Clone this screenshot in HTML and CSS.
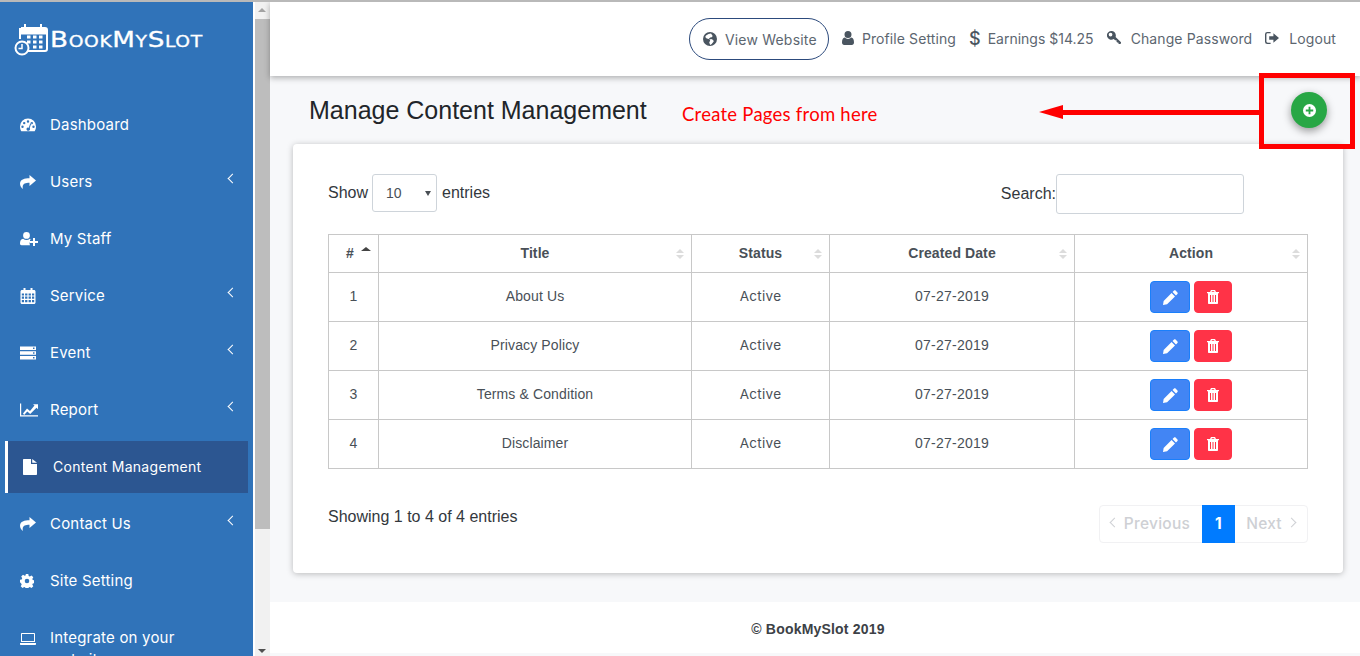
FILE: index.html
```html
<!DOCTYPE html>
<html lang="en">
<head>
<meta charset="utf-8">
<title>Manage Content Management</title>
<link rel="stylesheet" href="styles.css">
</head>
<body>
<svg class="defs" aria-hidden="true">
  <symbol id="i-gauge" viewBox="0 0 16 14"><path fill-rule="evenodd" d="M8 .5A8 8 0 0 0 0 8.5c0 1.800.5 3.400 1.300 4.700h13.400A8 8 0 0 0 16 8.500a8 8 0 0 0-8-8zM8 2.300a1.200 1.200 0 1 1 0 2.400 1.200 1.200 0 0 1 0-2.400zM4.200 3.900a1.200 1.200 0 1 1 0 2.400 1.200 1.200 0 0 1 0-2.400zM11.800 3.900a1.200 1.200 0 1 1 0 2.400 1.200 1.200 0 0 1 0-2.400zM2.500 7.600a1.200 1.200 0 1 1 0 2.400 1.200 1.200 0 0 1 0-2.400zM13.500 7.600a1.200 1.200 0 1 1 0 2.400 1.200 1.200 0 0 1 0-2.400zM10.500 4.500l.9.400-1.700 5a1.800 1.800 0 1 1-3.200.9 1.800 1.800 0 0 1 2.300-1.100z"/></symbol>
  <symbol id="i-share" viewBox="0 0 16 14"><path d="M9.500 0 16 5.500 9.500 11V7.700C5.500 7.700 3 8.500 2.700 11.500c-.1.900 0 1.700.3 2.500C1.300 12.800 0 10.800 0 8.700 0 4.500 4.500 3.300 9.500 3.300z"/></symbol>
  <symbol id="i-userplus" viewBox="0 0 18 14"><path d="M6.500 0a3.400 3.400 0 1 1 0 6.800 3.400 3.400 0 0 1 0-6.800zM3.200 6.800c.9.800 2 1.200 3.300 1.200s2.400-.4 3.300-1.200c.7.100 1.200.4 1.600.8H10v3h-.5c0 .9.100 1.700.5 2.600H1.500C.6 13.200 0 12.600 0 11.600 0 9 .8 7 3.200 6.800zM13 6h2v3h3v2h-3v3h-2v-3h-3V9h3z"/></symbol>
  <symbol id="i-cal" viewBox="0 0 15 16"><path fill-rule="evenodd" d="M3 0h2v2h5V0h2v2h1.500c.8 0 1.500.7 1.500 1.500v11c0 .8-.7 1.500-1.500 1.500h-12C.7 16 0 15.300 0 14.500v-11C0 2.700.7 2 1.500 2H3zM1.300 5.500v2h2.200v-2zm3.300 0v2h2.300v-2zm3.500 0v2h2.300v-2zm3.400 0v2h2.200v-2zM1.300 8.600v2.200h2.200V8.600zm3.300 0v2.200h2.300V8.600zm3.500 0v2.200h2.300V8.600zm3.400 0v2.200h2.200V8.600zM1.300 11.900v2.300h2.200v-2.300zm3.300 0v2.300h2.300v-2.300zm3.500 0v2.300h2.300v-2.300zm3.400 0v2.300h2.200v-2.300z"/></symbol>
  <symbol id="i-server" viewBox="0 0 16 13"><path fill-rule="evenodd" d="M0 0h16v3.500H0zM0 4.700h16v3.600H0zM0 9.500h16V13H0zM13 1v1.500h1.500V1zM13 5.700v1.500h1.500V5.700zM13 10.500V12h1.500v-1.500z"/></symbol>
  <symbol id="i-chart" viewBox="0 0 18 13"><path d="M0 0h1.200v11.800H18V13H0zM3 10l4-5 3 2.500L14.500 2 13 .8H18v5l-1.500-1.600L10.200 10.500 7.300 8l-3.200 3.400z"/></symbol>
  <symbol id="i-file" viewBox="0 0 14 16"><path d="M0 1C0 .4.400 0 1 0h7v5h6v10c0 .6-.4 1-1 1H1c-.6 0-1-.4-1-1zM9.200 0 14 3.800H9.200z"/></symbol>
  <symbol id="i-cog" viewBox="0 0 14 14"><path fill-rule="evenodd" d="M5.700 0h2.600l.4 1.900 1.100.5 1.700-1 1.800 1.800-1 1.700.5 1.100 2.200.4v2.600l-2.200.4-.5 1.100 1 1.700-1.800 1.800-1.700-1-1.100.5-.4 2H5.700l-.4-2-1.100-.5-1.700 1-1.800-1.800 1-1.700-.5-1.100L0 8.300V5.700l1.700-.3.500-1.100-1-1.700L3 .8l1.700 1 1.100-.5zM7 4.700a2.300 2.300 0 1 0 0 4.600 2.300 2.300 0 0 0 0-4.600z"/></symbol>
  <symbol id="i-laptop" viewBox="0 0 16 12"><path fill-rule="evenodd" d="M2 0h12c.6 0 1 .4 1 1v8H1V1c0-.6.400-1 1-1zm0 1v7h12V1zM0 10h16v1c0 .6-.4 1-1 1H1c-.6 0-1-.4-1-1z"/></symbol>
  <symbol id="i-globe" viewBox="0 0 14 14"><path fill-rule="evenodd" d="M7 0a7 7 0 1 1 0 14A7 7 0 0 1 7 0zM3 3.500 2.200 5l1.500 1.500 2.300.5 1.200 1.500-1 2 1 2.500 1.500-1 2-2.500-.5-1.500-2-1-1.700.5-.5-1 1.200-1 1.500-.2 1-1.300L8 1.500 5.500 2z"/></symbol>
  <symbol id="i-user" viewBox="0 0 12 14"><path d="M6 0a3.500 3.500 0 1 1 0 7 3.500 3.500 0 0 1 0-7zM2.700 6.600C3.600 7.500 4.700 8 6 8s2.400-.5 3.300-1.400c1.800.2 2.700 1.900 2.700 4.900 0 1.500-.9 2.500-2.200 2.500H2.200C.9 14 0 13 0 11.500c0-3 .9-4.700 2.700-4.900z"/></symbol>
  <symbol id="i-key" viewBox="0 0 15 15"><path fill-rule="evenodd" d="M4.800 0C7.400 0 9.500 2.100 9.500 4.700c0 .6-.1 1.100-.3 1.600L15 12v1.200l-.7.800h-1.500l-.6-.6v-1.200h-1.300l-.7-.8V10H8.700L7.200 8.600A4.700 4.700 0 1 1 4.800 0zM3.800 1.800a2 2 0 1 0 0 4 2 2 0 0 0 0-4z"/></symbol>
  <symbol id="i-logout" viewBox="0 0 15 13"><path fill-rule="evenodd" d="M2.500 0H6v1.500H3C2 1.500 1.500 2 1.500 3v7c0 1 .5 1.500 1.500 1.500h3V13H2.500A2.500 2.500 0 0 1 0 10.500v-8A2.500 2.500 0 0 1 2.500 0zM9 1.500l6 5-6 5V8.500H4.500v-4H9z"/></symbol>
  <symbol id="i-pencil" viewBox="0 0 14 14"><path d="M10.300.5c.4-.4 1-.4 1.400 0l1.800 1.800c.4.400.4 1 0 1.400l-1.400 1.400L8.900 1.900zM8 2.800 11.200 6l-7.400 7.400L0 14l.6-3.800z"/></symbol>
  <symbol id="i-trash" viewBox="0 0 12 14"><path fill-rule="evenodd" d="M4 0h4l1 2h3v1.300h-1V13c0 .6-.4 1-1 1H2c-.6 0-1-.4-1-1V3.300H0V2h3zM5 1.200 4.500 2h3L7 1.200zM3 5v7h1V5zm2.500 0v7h1V5zM8 5v7h1V5z"/></symbol>
  <symbol id="i-plus" viewBox="0 0 14 14"><path fill-rule="evenodd" d="M7 0a7 7 0 1 1 0 14A7 7 0 0 1 7 0zM6 3v3H3v2h3v3h2V8h3V6H8V3z"/></symbol>
</svg>

<div class="app">
  <aside class="sidebar">
    <div class="logo">
      <svg class="logo-icon" viewBox="0 0 36 34" fill="none" stroke="#fff">
        <path stroke-width="2" d="M7 6h24c1.500 0 2 .5 2 2v19c0 1.500-.5 2-2 2H14"/>
        <path stroke-width="6" d="M6 9.500h26"/>
        <path stroke-width="2" d="M6 6v11M11 2v6M27 2v6"/>
        <path stroke-width="3" d="M13 15h3.500M19 15h3.500M25 15h3.500M13 20h3.500M19 20h3.500M25 20h3.500M19 25h3.500M25 25h3.500"/>
        <circle stroke-width="2" cx="8" cy="26" r="6.500"/>
        <path stroke-width="1.500" d="M8 22v4.500H4.500"/>
      </svg>
      <span class="logo-text">BookMySlot</span>
    </div>
    <nav class="menu">
      <a class="menu-item"><svg class="mi"><use href="#i-gauge"/></svg><span>Dashboard</span></a>
      <a class="menu-item has-sub"><svg class="mi"><use href="#i-share"/></svg><span>Users</span></a>
      <a class="menu-item"><svg class="mi wide"><use href="#i-userplus"/></svg><span>My Staff</span></a>
      <a class="menu-item has-sub"><svg class="mi tall"><use href="#i-cal"/></svg><span>Service</span></a>
      <a class="menu-item has-sub"><svg class="mi"><use href="#i-server"/></svg><span>Event</span></a>
      <a class="menu-item has-sub"><svg class="mi wide"><use href="#i-chart"/></svg><span>Report</span></a>
      <a class="menu-item active"><svg class="mi"><use href="#i-file"/></svg><span>Content Management</span></a>
      <a class="menu-item has-sub"><svg class="mi"><use href="#i-share"/></svg><span>Contact Us</span></a>
      <a class="menu-item"><svg class="mi small"><use href="#i-cog"/></svg><span>Site Setting</span></a>
      <a class="menu-item multi"><svg class="mi"><use href="#i-laptop"/></svg><span>Integrate on your website</span></a>
    </nav>
  </aside>

  <div class="scrollbar">
    <div class="sb-up"></div>
    <div class="sb-thumb"></div>
    <div class="sb-track"></div>
    <div class="sb-down"></div>
  </div>

  <main class="main">
    <header class="topbar">
      <a class="pill"><svg class="ti"><use href="#i-globe"/></svg>View Website</a>
      <a class="top-link"><svg class="ti user"><use href="#i-user"/></svg>Profile Setting</a>
      <a class="top-link earn"><b class="dollar">$</b>Earnings $14.25</a>
      <a class="top-link"><svg class="ti"><use href="#i-key"/></svg>Change Password</a>
      <a class="top-link"><svg class="ti"><use href="#i-logout"/></svg>Logout</a>
    </header>

    <div class="page-title"><h1>Manage Content Management</h1></div>

    <section class="card">
      <div class="controls">
        <label class="length">Show
          <span class="select-wrap"><select class="length-select"><option>10</option><option>25</option><option>50</option></select></span>
          entries</label>
        <label class="search">Search:<input class="search-input" type="text"></label>
      </div>

      <table class="grid">
        <thead>
          <tr>
            <th class="c-n sorted">#</th>
            <th class="c-t">Title</th>
            <th class="c-s">Status</th>
            <th class="c-d">Created Date</th>
            <th class="c-a">Action</th>
          </tr>
        </thead>
        <tbody>
          <tr><td>1</td><td>About Us</td><td class="status">Active</td><td class="date">07-27-2019</td><td class="acts"><button class="btn edit"><svg><use href="#i-pencil"/></svg></button><button class="btn del"><svg><use href="#i-trash"/></svg></button></td></tr>
          <tr><td>2</td><td>Privacy Policy</td><td class="status">Active</td><td class="date">07-27-2019</td><td class="acts"><button class="btn edit"><svg><use href="#i-pencil"/></svg></button><button class="btn del"><svg><use href="#i-trash"/></svg></button></td></tr>
          <tr><td>3</td><td>Terms &amp; Condition</td><td class="status">Active</td><td class="date">07-27-2019</td><td class="acts"><button class="btn edit"><svg><use href="#i-pencil"/></svg></button><button class="btn del"><svg><use href="#i-trash"/></svg></button></td></tr>
          <tr><td>4</td><td>Disclaimer</td><td class="status">Active</td><td class="date">07-27-2019</td><td class="acts"><button class="btn edit"><svg><use href="#i-pencil"/></svg></button><button class="btn del"><svg><use href="#i-trash"/></svg></button></td></tr>
        </tbody>
      </table>

      <div class="table-foot">
        <div class="info">Showing 1 to 4 of 4 entries</div>
        <div class="pager">
          <a class="pg prev">Previous</a>
          <a class="pg cur">1</a>
          <a class="pg next">Next</a>
        </div>
      </div>
    </section>

    <footer class="footer">© BookMySlot 2019</footer>
  </main>
</div>

<a class="fab"><svg><use href="#i-plus"/></svg></a>
<div class="callout-box"></div>
<div class="callout-line"></div>
<div class="callout-head"></div>
<div class="callout-text">Create Pages from here</div>
</body>
</html>
```
FILE: styles.css
```css
* { box-sizing: border-box; }
html, body { margin: 0; height: 100%; overflow: hidden; }
body { background: #fff; font-family: "Liberation Sans", Arial, sans-serif; color: #212529; border-top: 2px solid #b9b9b9; position: relative; }
.defs { position: absolute; width: 0; height: 0; }
.app { display: flex; height: 654px; }

/* sidebar */
.sidebar { width: 253px; flex: none; background: #3073b9; overflow: hidden; color: #fff; font-family: Inter, "Open Sans", sans-serif; }
.logo { display: flex; align-items: center; height: 94px; padding: 0 0 20px 14px; }
.logo-icon { width: 36px; height: 34px; flex: none; }
.logo-text { font-family: "DejaVu Sans", sans-serif; font-variant: small-caps; font-size: 21px; letter-spacing: .5px; line-height: 1; transform: scaleX(1.25); transform-origin: left center; -webkit-text-stroke: .3px #fff; padding-top: 3px; }
.menu { display: flex; flex-direction: column; }
.menu-item { height: 57px; flex: none; display: flex; align-items: center; padding: 0 0 0 20px; position: relative; font-size: 15px; letter-spacing: .2px; color: #fff; }
.menu-item span { margin-left: 14px; }
.mi { width: 16px; height: 14px; fill: #fff; flex: none; }
.mi.wide { width: 18px; height: 14px; margin-right: -2px; }
.mi.small { width: 14px; height: 14px; margin-right: 2px; }
.mi.tall { height: 16px; }
.has-sub::after { content: ""; position: absolute; left: 229px; top: 22px; width: 6px; height: 6px; border-left: 1.5px solid #fff; border-bottom: 1.5px solid #fff; transform: rotate(45deg); }
.active { height: 52px; margin: 3px 5px 2px; width: 243px; background: #2c5691; border-left: 3px solid #fff; padding: 0 0 1px 15px; font-size: 14px; letter-spacing: .3px; }
.active .mi { width: 14px; height: 16px; margin-right: 2px; }
.multi { align-items: flex-start; padding-top: 21px; height: 80px; }
.multi .mi { margin-top: 2px; }
.multi span { width: 170px; line-height: 22px; margin-top: -3px; }

/* scrollbar */
.scrollbar { width: 17px; flex: none; background: #f1f1f1; border-left: 2px solid #fff; display: flex; flex-direction: column; align-items: center; }
.sb-up, .sb-down { height: 17px; width: 15px; flex: none; position: relative; }
.sb-up::after, .sb-down::after { content: ""; position: absolute; left: 3px; border-left: 4px solid transparent; border-right: 4px solid transparent; }
.sb-up::after { top: 6px; border-bottom: 4px solid #a3a3a3; }
.sb-down::after { bottom: 3px; border-top: 4px solid #505050; }
.sb-thumb { height: 510px; width: 15px; background: #bdbdbd; flex: none; }
.sb-track { flex: 1; }

/* main */
.main { flex: 1; min-width: 0; display: flex; flex-direction: column; background: #f7f8fa; }
.topbar { height: 74px; flex: none; background: #fff; box-shadow: 0 2px 6px rgba(0,0,0,.3); position: relative; display: flex; align-items: center; justify-content: flex-end; padding: 0 24px 2px 0; font-family: Inter, "Open Sans", sans-serif; font-size: 14px; letter-spacing: .1px; color: #5c6670; }
.pill { width: 140px; height: 42px; border: 1px solid #2c4a7c; border-radius: 21px; display: flex; align-items: center; padding-left: 13px; margin-right: 13px; margin-top: 2px; letter-spacing: .2px; }
.ti { width: 14px; height: 14px; fill: #4a5560; margin-right: 8px; flex: none; }
.top-link { display: flex; align-items: center; margin-right: 13px; }
.top-link:last-child { margin-right: 0; }
.top-link .ti { margin-right: 10px; }
.top-link .user { width: 12px; margin-right: 8px; }
.earn { letter-spacing: 0; }
.dollar { font-size: 18px; font-weight: 500; color: #4a5560; margin-right: 7px; }

.page-title { height: 68px; flex: none; padding-left: 39px; display: flex; align-items: center; }
.page-title h1 { margin: 0; font-size: 25px; font-weight: 400; color: #212529; }

.card { margin: 0 17px 29px 23px; height: 429px; flex: none; background: #fff; border-radius: 4px; box-shadow: 0 1px 6px rgba(0,0,0,.25); padding: 30px 35px; }
.controls { display: flex; justify-content: space-between; height: 40px; margin-bottom: 20px; padding-right: 64px; font-size: 16px; color: #33383d; }
.length { display: flex; align-items: flex-start; gap: 4px; line-height: 38px; }
.select-wrap { position: relative; display: block; width: 65px; height: 38px; margin-right: 1px; }
.select-wrap::after { content: ""; position: absolute; right: 6px; top: 17px; border-left: 3.5px solid transparent; border-right: 3.5px solid transparent; border-top: 5px solid #4a4f55; pointer-events: none; }
.length-select { appearance: none; display: block; width: 65px; height: 38px; border: 1px solid #ced4da; border-radius: 3px; background: #fff; font: 14px "Liberation Sans", sans-serif; color: #495057; padding-left: 13px; }
.search { display: flex; align-items: center; }
.search-input { width: 188px; height: 40px; border: 1px solid #ced4da; border-radius: 3px; background: #fff; }

.grid { width: 979px; border-collapse: collapse; table-layout: fixed; font-size: 14px; color: #495057; letter-spacing: .12px; }
.grid th, .grid td { border: 1px solid #c8c8c8; text-align: center; padding: 0 0 2px; }
.grid th { height: 38px; font-weight: 700; position: relative; letter-spacing: .1px; }
.grid td { height: 49px; }
.status { font-family: Inter, "Open Sans", sans-serif; font-size: 13.5px; letter-spacing: .3px; }
.date { letter-spacing: .25px; }
.c-n { width: 50px; } .c-t { width: 313px; } .c-s { width: 138px; } .c-d { width: 245px; } .c-a { width: 233px; }
.grid th::before, .grid th::after { content: ""; position: absolute; right: 7px; border-left: 4px solid transparent; border-right: 4px solid transparent; }
.grid th::before { top: 14px; border-bottom: 4px solid #dcdcdc; }
.grid th::after { top: 20px; border-top: 4px solid #dcdcdc; }
.grid th.sorted { padding-right: 7px; }
.grid th.sorted::before { border-bottom-color: #444; top: 12px; right: 7px; border-left-width: 5px; border-right-width: 5px; }
.grid th.sorted::after { display: none; }
.grid td.acts { font-size: 0; padding: 0; }
.btn { height: 32px; border-radius: 4px; padding: 0; display: inline-flex; align-items: center; justify-content: center; vertical-align: middle; }
.btn svg { fill: #fff; }
.edit { width: 40px; background: #4285f4; border: 1px solid #1a7ffb; margin-right: 4px; }
.edit svg { width: 15px; height: 15px; }
.del { width: 38px; background: #ff3347; border: 1px solid #ff3347; }
.del svg { width: 12px; height: 14px; }

.table-foot { display: flex; justify-content: space-between; margin-top: 36px; height: 38px; font-size: 16px; color: #33383d; }
.info { line-height: 24px; }
.pager { display: flex; height: 38px; border: 1px solid #f1f1f3; border-radius: 4px; font-family: Inter, "Open Sans", sans-serif; font-weight: 500; font-size: 15.5px; letter-spacing: .25px; color: #ced0d4; }
.pg { display: flex; align-items: center; justify-content: center; padding-bottom: 1px; }
.prev { width: 102px; padding-left: 12px; position: relative; }
.next { width: 72px; padding-right: 14px; position: relative; }
.prev::before, .next::after { content: ""; position: absolute; top: 13px; width: 6px; height: 6px; border-left: 1.500px solid #ced0d4; border-bottom: 1.500px solid #ced0d4; }
.prev::before { left: 11px; transform: rotate(45deg); }
.next::after { right: 12px; transform: rotate(225deg); }
.cur { width: 33px; background: #007bff; color: #fff; margin: -1px 0; font-weight: 700; }

.footer { height: 51px; flex: none; background: #fff; display: flex; align-items: center; justify-content: center; padding: 2px 0 0 6px; font-size: 14px; font-weight: 700; color: #3c4146; letter-spacing: .2px; }

/* annotation layer */
.fab { position: absolute; left: 1291px; top: 90px; width: 36px; height: 36px; border-radius: 50%; background: #28a745; box-shadow: 0 3px 8px rgba(0,0,0,.4); display: flex; align-items: center; justify-content: center; }
.fab svg { width: 13px; height: 13px; fill: #fff; }
.callout-box { position: absolute; left: 1259px; top: 71px; width: 96px; height: 76px; border: 5px solid #ff0000; }
.callout-line { position: absolute; left: 1060px; top: 108px; width: 200px; height: 5px; background: #ff0000; }
.callout-head { position: absolute; left: 1039px; top: 103px; border-top: 7.500px solid transparent; border-bottom: 7.500px solid transparent; border-right: 24px solid #ff0000; }
.callout-text { position: absolute; left: 682px; top: 101px; font-family: Lato, sans-serif; font-size: 18.5px; color: #ff0000; letter-spacing: .25px; }
```
